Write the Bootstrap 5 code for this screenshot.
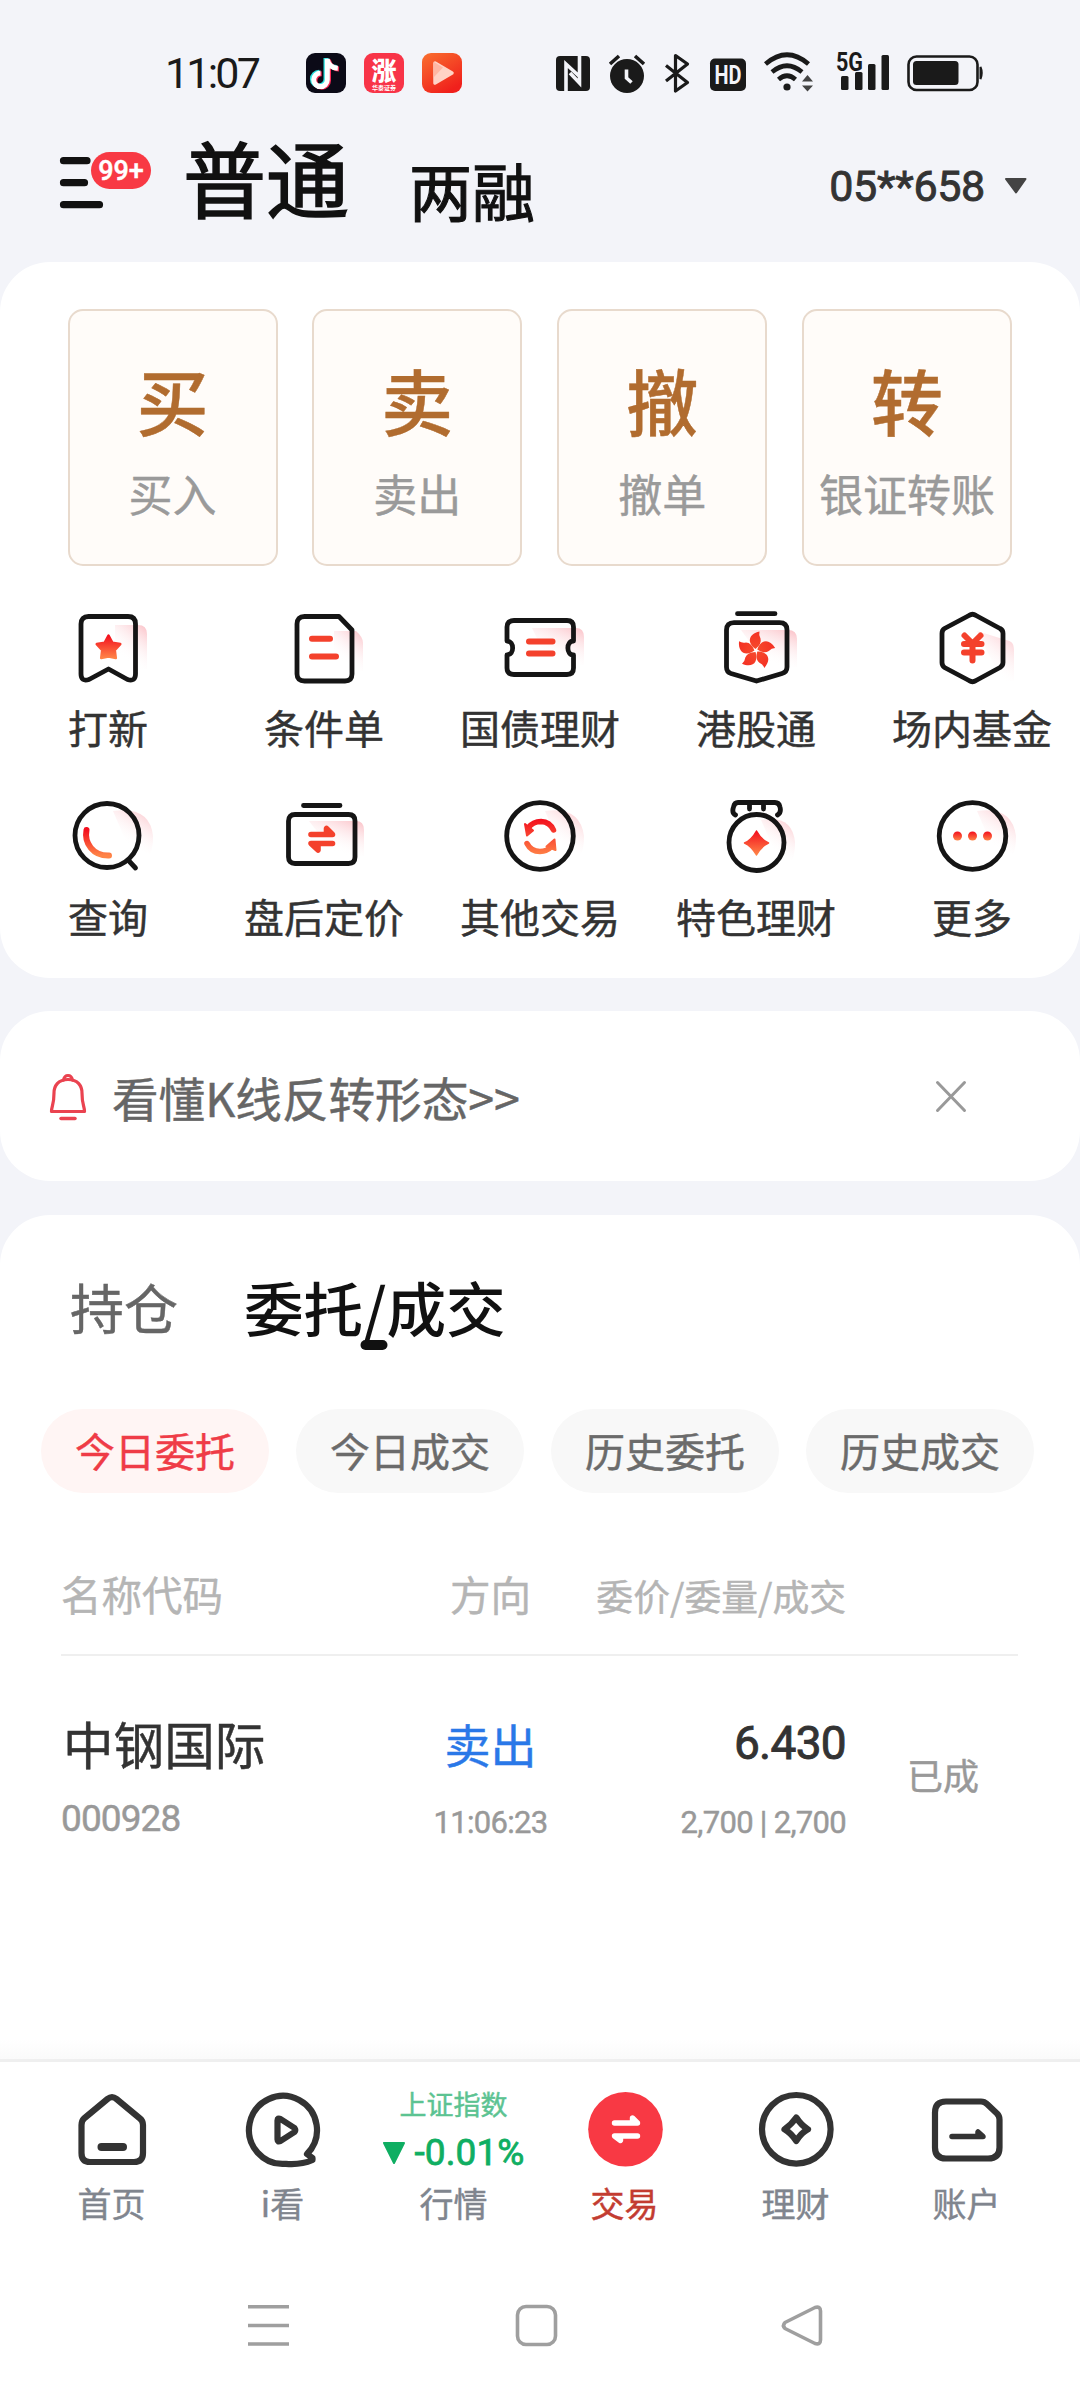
<!DOCTYPE html>
<html lang="zh-CN">
<head>
<meta charset="utf-8">
<meta name="viewport" content="width=device-width, initial-scale=1">
<title>交易</title>
<link href="https://cdn.jsdelivr.net/npm/bootstrap@5.3.0/dist/css/bootstrap.min.css" rel="stylesheet">
<style>
body{width:1080px;height:2400px;background:#f3f4f9;font-family:"Noto Sans CJK SC",sans-serif;color:#333;overflow:hidden;line-height:1;-webkit-text-stroke:.45px}
svg{display:block;flex:none;overflow:visible}
svg text{-webkit-text-stroke:0}
.num{font-family:Roboto,"Noto Sans CJK SC",sans-serif}
.status{height:126px;padding:20px 0 0 165px}
.clock{font-size:43px;letter-spacing:-2.8px;width:141px;color:#1a1a1a;line-height:50px;-webkit-text-stroke:0}
.sys{margin-left:93px}
.topbar{height:136px;padding-left:60px}
.burger{width:92px;margin-top:24px}
.count{left:31px;top:2px;width:60px;height:37px;background:#f83944;color:#fff;font-size:27px;line-height:38px;font-weight:500}
.mode-main{font-size:83px;color:#111;margin:9px 0 0 31px;-webkit-text-stroke:1.6px}
.mode-alt{font-size:63px;color:#111;margin:31px 0 0 60px;-webkit-text-stroke:1.1px}
.account{font-size:43px;line-height:50px;margin:35px 52px 0 auto;letter-spacing:-.3px;-webkit-text-stroke:.9px}
.account svg{margin-left:19px}
.panel{background:#fff;border-radius:50px}
.panel-a{height:716px;padding:47px 0 0}
.tiles{gap:34.7px;padding:0 68px 0 67.5px}
.tile{flex:1 1 0;height:257px;border:2px solid #e8dacd;border-radius:15px;background:#fffcf9;padding-top:52px;color:#9a9a9a;white-space:nowrap}
.tile b{font-weight:500;font-size:72px;line-height:72px;color:#b16c2f}
.tile span{font-size:44px;line-height:44px;margin-top:36px}
.entries{margin-top:31px}
.entry{width:216px;height:189px;font-size:40px;white-space:nowrap}
.entry svg{width:100px;height:100px}
.entry span{line-height:40px;margin-top:10px}
.ln{fill:none;stroke:#151515;stroke-width:4.8;stroke-linecap:round;stroke-linejoin:round}
.rl{fill:none;stroke:url(#hot);stroke-width:6;stroke-linecap:round;stroke-linejoin:round}
.rs{fill:none;stroke:#f4412c;stroke-width:6;stroke-linecap:round;stroke-linejoin:round}
.notice{height:170px;margin-top:33px;padding:2px 114px 0 49px;color:#666;font-size:46.6px}
.notice span{margin-left:23px}
.panel-c{height:844px;margin-top:34px;border-radius:50px 50px 0 0}
.tabs{height:194px;padding:0 70px;color:#666}
.tab1{font-size:54px;margin-top:65px}
.tab2{font-size:59.6px;color:#111;margin:62px 0 0 66px;font-weight:500;width:262px;-webkit-text-stroke:0}
.tab2 i{left:125px;bottom:-13px;width:27px;height:10px;border-radius:5px;background:#111;transform:translateX(-50%);margin-left:5px}
.pills{gap:27px;padding-left:41px}
.pill{width:228px;height:84px;background:#f8f8f8;color:#6b6b6b;font-size:40px;line-height:82px}
.pill.on{background:#fff5f4;color:#ef3c47}
.thead-row{margin:0 62px 0 61px;height:163px;border-bottom:2px solid #efefef;color:#b5b5b5;padding-top:81px;font-size:40.5px}
.c1{width:295px}.c2{width:269px}.c3{width:221px}
.thead-row .c3{font-size:36.8px;line-height:42px}
.order{margin:0 62px 0 61px;padding-top:59px}
.nm{font-size:50.6px;line-height:56px;padding-left:2px}
.side{font-size:46px;line-height:56px;color:#2a78e8}
.price{font-size:46px;line-height:56px;letter-spacing:-.7px;-webkit-text-stroke:.9px}
.code{font-size:37px;line-height:40px;margin-top:28px;letter-spacing:-.9px}
.minor{font-size:31px;line-height:40px;margin-top:32px;letter-spacing:-.7px}
.done{font-size:36px;line-height:40px;margin:39px 0 0 61px}
.gray{color:#999}
.shadow-strip{height:20px;margin-top:-20px;background:linear-gradient(#fff,#fafafa);position:relative}
.bottom{height:341px;background:#fff;border-top:3px solid #efefef}
.tabbar{padding:27px 27px 0 26px;height:190px}
.tabitem{width:171px;color:#80858e;font-size:34px}
.tabitem svg.ic{width:80px;height:80px}
.tabitem .cap{line-height:34px;margin-top:17px;white-space:nowrap}
.dk{fill:none;stroke:#333;stroke-width:6.2;stroke-linejoin:round;stroke-linecap:round}
.idx{height:80px;color:#5cc392;font-size:27px;line-height:27px;padding-top:1px}
.chg{color:#0fae62;font-size:37px;line-height:40px;letter-spacing:.1px;margin-top:16px;-webkit-text-stroke:.8px}
.sysnav{margin-top:49px}
</style>
</head>
<body>
<svg width="0" height="0" class="position-absolute">
<defs>
<linearGradient id="hot" x1="0" y1="0" x2="0" y2="1"><stop offset="0" stop-color="#f30f1e"/><stop offset="1" stop-color="#ff8447"/></linearGradient>
<linearGradient id="hotu" gradientUnits="userSpaceOnUse" x1="0" y1="33" x2="0" y2="70"><stop offset="0" stop-color="#f30f1e"/><stop offset="1" stop-color="#ff8447"/></linearGradient>
<linearGradient id="petals" gradientUnits="userSpaceOnUse" x1="0" y1="30" x2="0" y2="80"><stop offset="0" stop-color="#f32a22"/><stop offset="1" stop-color="#fb7238"/></linearGradient>
<linearGradient id="pk" x1=".95" y1="0" x2=".45" y2=".85"><stop offset="0" stop-color="#fbc3c9"/><stop offset="1" stop-color="#fff" stop-opacity="0"/></linearGradient>
<linearGradient id="orange" x1="0" y1="0" x2=".6" y2="1"><stop offset="0" stop-color="#f9702f"/><stop offset="1" stop-color="#f0201c"/></linearGradient>
</defs>
</svg>

<div class="status d-flex align-items-center">
  <div class="clock num">11:07</div>
  <svg width="156" height="40" viewBox="0 0 156 40">
    <rect width="40" height="40" rx="9" fill="#0b0a17"/>
    <g fill="none" stroke-width="5" transform="translate(-1.500,1)">
      <path d="M21.500 4V25a6.800 6.800 0 1 1-6.800-6.800M21.500 5q2 8 10.500 8.500" stroke="#2de2e0"/>
      <path d="M24 5.500V26.500a6.800 6.800 0 1 1-6.800-6.800M24 6.500q2 8 10.500 8.500" stroke="#f62a56"/>
      <path d="M22.800 4.800V25.800a6.800 6.800 0 1 1-6.800-6.800M22.800 5.800q2 8 10.500 8.500" stroke="#fff"/>
    </g>
    <rect x="58" width="40" height="40" rx="9" fill="#f83448"/>
    <text x="78" y="27" font-size="25" font-weight="900" fill="#fff" text-anchor="middle">涨</text>
    <text x="78" y="36.500" font-size="6" font-weight="700" fill="#fff" text-anchor="middle">华泰证券</text>
    <rect x="116" width="40" height="40" rx="9" fill="url(#orange)"/>
    <path d="M129 10l17 10-17 10z" fill="#ffd3c6" stroke="#ffd3c6" stroke-width="3.500" stroke-linejoin="round"/>
    <path d="M128 9l9 5.500L128 24z" fill="#ffb7a3"/>
  </svg>
  <svg class="sys" width="430" height="44" viewBox="555 51 430 44" fill="#1a1a1a">
    <rect x="556" y="56" width="34" height="35" rx="4"/>
    <path d="M566 91V64l13 12M579.500 56v27L570 73" fill="none" stroke="#f3f4f9" stroke-width="3.600"/>
    <circle cx="627" cy="76" r="17"/><path d="M610 64l9-8M644 64l-9-8" stroke="#1a1a1a" stroke-width="3.600"/><path d="M626.500 69.500v8.500l5 4.500" fill="none" stroke="#f3f4f9" stroke-width="3.600"/>
    <path d="M666 65.500l21.500 17-12 8.500V55.500l12 8.500-21.500 17" fill="none" stroke="#1a1a1a" stroke-width="3.200" stroke-linejoin="round"/>
    <rect x="710" y="58.500" width="36" height="32.500" rx="5"/>
    <text class="num" x="728" y="83.500" font-size="25" font-weight="700" fill="#f3f4f9" text-anchor="middle" textLength="27" lengthAdjust="spacingAndGlyphs">HD</text>
    <g fill="none" stroke="#1a1a1a" stroke-width="4.600"><path d="M765.500 64q21.500-18.500 43 0M772 72q15-12.500 30 0M778.500 79.500q8.500-7.500 17 0"/></g>
    <circle cx="787" cy="87" r="3.600"/><path d="M802 81.500l5.500-6.500 5.500 6.500zM802 85.500h11l-5.500 6z" fill="#444"/>
    <text class="num" x="836" y="71" font-size="25" font-weight="700" textLength="27" lengthAdjust="spacingAndGlyphs">5G</text>
    <rect x="841" y="76" width="7.500" height="14" rx="1.500"/><rect x="855" y="72" width="7.500" height="18" rx="1.500"/><rect x="868" y="64" width="7.500" height="26" rx="1.500"/><rect x="881.500" y="55" width="7.500" height="35" rx="1.500"/>
    <rect x="908.500" y="56.500" width="69" height="33.500" rx="8" fill="none" stroke="#1a1a1a" stroke-width="2.600"/>
    <rect x="913" y="61" width="45.500" height="24" rx="3.500"/><path d="M980.500 67q2.500 6 0 12z" stroke="#1a1a1a" stroke-width="2"/>
  </svg>
</div>

<header class="topbar d-flex align-items-start">
  <div class="burger position-relative">
    <svg width="44" height="64" viewBox="0 0 44 64"><path d="M3.500 10.700H27M3.500 32.700H24.500M3.500 54.700H39.500" stroke="#111" stroke-width="7.200" stroke-linecap="round"/></svg>
    <span class="count num position-absolute rounded-pill text-center">99+</span>
  </div>
  <div class="mode-main">普通</div>
  <div class="mode-alt">两融</div>
  <div class="account num d-flex align-items-center">05**658<svg width="24" height="18" viewBox="0 0 24 18"><path d="M2 2h19.500L12 15.500z" fill="#444" stroke="#444" stroke-width="2" stroke-linejoin="round"/></svg></div>
</header>

<section class="panel panel-a">
  <div class="tiles d-flex">
    <div class="tile d-flex flex-column align-items-center"><b>买</b><span>买入</span></div>
    <div class="tile d-flex flex-column align-items-center"><b>卖</b><span>卖出</span></div>
    <div class="tile d-flex flex-column align-items-center"><b>撤</b><span>撤单</span></div>
    <div class="tile d-flex flex-column align-items-center"><b>转</b><span>银证转账</span></div>
  </div>
  <div class="entries d-flex flex-wrap">
    <div class="entry d-flex flex-column align-items-center">
      <svg viewBox="0 0 100 100"><path d="M57 28H80q9 0 9 9V72H57z" fill="url(#pk)"/><path class="ln" d="M30.500 19.500H70Q77.500 19.500 77.500 27V77Q77.500 85 69.500 82.500L50.500 72 31 82.500Q23 85 23 77V27Q23 19.500 30.500 19.500Z"/><path d="M50.500 38.500l3.800 7.200 8 1.400-5.500 6 1 8-7.300-1.600-7.300 1.600 1-8-5.500-6 8-1.400z" fill="url(#hot)" stroke="url(#hot)" stroke-width="2.500" stroke-linejoin="round"/></svg><span>打新</span></div>
    <div class="entry d-flex flex-column align-items-center">
      <svg viewBox="0 0 100 100"><path d="M60 34H82q7 6 7 12V74H60z" fill="url(#pk)"/><path class="ln" d="M30.500 19.500H65L78 33V77Q78 84 71 84H30.500Q23 84 23 77V27Q23 19.500 30.500 19.500Z"/><path class="rs" d="M38 41.700H56M38 59.500H62"/></svg><span>条件单</span></div>
    <div class="entry d-flex flex-column align-items-center">
      <svg viewBox="0 0 100 100"><path d="M42 31H86q8 0 8 9V68H60z" fill="url(#pk)"/><path class="ln" d="M24 23.500H77Q83.500 23.500 83.500 30V44C76 44 76 58 83.500 58V71Q83.500 77.500 77 77.500H24Q17 77.500 17 71V58C24.500 58 24.500 44 17 44V30Q17 23.500 24 23.500Z"/><path class="rs" d="M39 44.500H62.500M39 56.500H62.500"/></svg><span>国债理财</span></div>
    <div class="entry d-flex flex-column align-items-center">
      <svg viewBox="0 0 100 100"><path d="M35 33H82q9 0 9 9V70H62z" fill="url(#pk)"/><path class="ln" d="M31.500 16.700H69M28 25.700H73.500Q81 25.700 81 33V70Q81 75 76 76.500L50.500 84 25 76.500Q20.500 75 20.500 70V33Q20.500 25.700 28 25.700Z"/><g fill="url(#petals)"><path id="petal" d="M49.500 52C41 46 42 37 53.500 34.500Q52.500 38 54.500 41.500Q56 47 49.500 52z"/><use href="#petal" transform="rotate(72 50 53.500)"/><use href="#petal" transform="rotate(144 50 53.500)"/><use href="#petal" transform="rotate(216 50 53.500)"/><use href="#petal" transform="rotate(288 50 53.500)"/></g></svg><span>港股通</span></div>
    <div class="entry d-flex flex-column align-items-center">
      <svg viewBox="0 0 100 100"><path d="M55 34L84 43Q92 44 92 52V84H80z" fill="url(#pk)"/><path class="ln" d="M47 18.500Q50.500 16 54 18.500L78 31.500Q81 33 81 36.500V65.500Q81 68.500 78 70.500L54 83.500Q50.500 86 47 83.500L22.500 70.500Q20 68.500 20 65.500V36.500Q20 33 22.500 31.500Z"/><path class="rs" d="M42.500 38.500L50.500 46.500 58.500 38.500M42 47H59.500M42 55.500H59.500M50.500 47V63.500"/></svg><span>场内基金</span></div>
    <div class="entry d-flex flex-column align-items-center">
      <svg viewBox="0 0 100 100"><path d="M55 25Q92 20 95 50Q95 62 92 68L70 60z" fill="url(#pk)"/><circle class="ln" cx="49" cy="49.500" r="32"/><path class="ln" d="M71 75L77.500 82"/><path d="M28.500 44C26 57 35 70 51 69.500" class="rl"/></svg><span>查询</span></div>
    <div class="entry d-flex flex-column align-items-center">
      <svg viewBox="0 0 100 100"><path d="M35 35H82q8 0 8 9V70H62z" fill="url(#pk)"/><path class="ln" d="M29.500 19.500H66M21 28.500H74.500Q81 28.500 81 35V71Q81 77.500 74.500 77.500H21Q14.500 77.500 14.500 71V35Q14.500 28.500 21 28.500Z"/><path d="M37 48.500H58.500L52.500 42.500V48M58.500 57.500H37L44 64V58" fill="none" stroke="#f4412c" stroke-width="5.600" stroke-linecap="round" stroke-linejoin="round"/></svg><span>盘后定价</span></div>
    <div class="entry d-flex flex-column align-items-center">
      <svg viewBox="0 0 100 100"><path d="M55 25Q90 20 94 50Q94 62 91 68L70 60z" fill="url(#pk)"/><circle class="ln" cx="50" cy="50" r="33.300"/><g fill="none" stroke="url(#hotu)" stroke-width="5.500" stroke-linecap="round"><path d="M38 42Q43 35.500 51 35.500Q60 36 63.500 44M37 57.500Q41 65.500 50 65.500Q57 65.500 62 60"/></g><path d="M35 38l8 6.500-6 5zM65.500 64l-9-3.500 8-7z" fill="url(#hotu)" stroke="url(#hotu)" stroke-width="2" stroke-linejoin="round"/></svg><span>其他交易</span></div>
    <div class="entry d-flex flex-column align-items-center">
      <svg viewBox="0 0 100 100"><path d="M55 34Q86 28 89 56Q89 68 86 74L68 64z" fill="url(#pk)"/><ellipse class="ln" cx="50.500" cy="56.500" rx="27.500" ry="28"/><path class="ln" d="M29.500 29Q25.500 27 27.500 21Q28.500 16.500 32 16.500H69Q73 16.500 74 21Q75.500 27 71.500 29M43.500 18V23M57.500 18V23"/><path d="M50.500 45q5 9 12 12q-7 3-12 12q-5-9-12-12q7-3 12-12z" fill="url(#hot)" stroke="url(#hot)" stroke-width="1.500" stroke-linejoin="round"/></svg><span>特色理财</span></div>
    <div class="entry d-flex flex-column align-items-center">
      <svg viewBox="0 0 100 100"><path d="M55 25Q90 20 94 50Q94 62 91 68L70 60z" fill="url(#pk)"/><circle class="ln" cx="50.500" cy="50" r="33.300"/><g fill="url(#hot)"><circle cx="35.500" cy="50" r="4.500"/><circle cx="50.500" cy="50" r="4.500"/><circle cx="65.500" cy="50" r="4.500"/></g></svg><span>更多</span></div>
  </div>
</section>

<section class="panel notice d-flex align-items-center">
  <svg width="40" height="48" viewBox="0 0 40 48" fill="none" stroke="#ea4350" stroke-width="3.200" stroke-linejoin="round" stroke-linecap="round"><path d="M19 6.500C9 6.500 5 13 5 20C5 32 2.500 33 2.500 38.500H35.500C35.500 33 33 32 33 20C33 13 29 6.500 19 6.500Z"/><path d="M14.500 7Q15.500 2.500 19 2.500T23.500 7"/><path d="M12 45.500H26" stroke-width="3.500"/></svg>
  <span>看懂K线反转形态&gt;&gt;</span>
  <svg class="ms-auto" width="30" height="32" viewBox="0 0 30 32"><path d="M1.500 1.500L28.500 29.500M28.500 1.500L1.500 29.500" stroke="#999" stroke-width="3" stroke-linecap="round"/></svg>
</section>

<section class="panel panel-c">
  <div class="tabs d-flex align-items-start">
    <div class="tab1">持仓</div>
    <div class="tab2 position-relative text-nowrap">委托/成交<i class="position-absolute"></i></div>
  </div>
  <div class="pills d-flex">
    <div class="pill on rounded-pill text-center">今日委托</div>
    <div class="pill rounded-pill text-center">今日成交</div>
    <div class="pill rounded-pill text-center">历史委托</div>
    <div class="pill rounded-pill text-center">历史成交</div>
  </div>
  <div class="thead-row d-flex">
    <div class="c1">名称代码</div>
    <div class="c2 text-center">方向</div>
    <div class="c3 text-nowrap d-flex justify-content-end">委价/委量/成交</div>
  </div>
  <div class="order d-flex">
    <div class="c1"><div class="nm">中钢国际</div><div class="code num gray">000928</div></div>
    <div class="c2 text-center"><div class="side">卖出</div><div class="minor num gray">11:06:23</div></div>
    <div class="c3 num text-end"><div class="price">6.430</div><div class="minor gray text-nowrap">2,700 | 2,700</div></div>
    <div class="done gray">已成</div>
  </div>
</section>

<div class="shadow-strip"></div>
<footer class="bottom">
  <nav class="tabbar d-flex">
    <div class="tabitem d-flex flex-column align-items-center"><svg class="ic" viewBox="0 0 80 80"><path class="dk" d="M12 29.500L35.500 10Q40 6.300 44.500 10L68 29.500Q71 32 71 36V64Q71 73 62 73H18Q9.500 73 9.500 64V36Q9.500 32 12 29.500Z"/><path class="dk" style="stroke-width:8" d="M29.500 58H51"/></svg><span class="cap">首页</span></div>
    <div class="tabitem d-flex flex-column align-items-center"><svg class="ic" viewBox="0 0 80 80"><path class="dk" d="M64 65A34 34 0 1 0 43 74.800Q58 76 69.500 71L69.500 69Z"/><path class="dk" d="M34.500 31.500Q34.500 28.500 37.500 30L51.500 39Q53 41 51.500 43L37.500 52Q34.500 53.500 34.500 50.500Z"/></svg><span class="cap">i看</span></div>
    <div class="tabitem d-flex flex-column align-items-center"><div class="idx text-center text-nowrap">上证指数<div class="chg num d-flex align-items-center"><svg class="me-2" width="24" height="24" viewBox="0 0 24 24"><path d="M2 2h20L12 22z" fill="#0fae62" stroke="#0fae62" stroke-width="2" stroke-linejoin="round"/></svg>-0.01%</div></div><span class="cap">行情</span></div>
    <div class="tabitem d-flex flex-column align-items-center"><svg class="ic" viewBox="0 0 80 80"><circle cx="40.500" cy="40.300" r="37.300" fill="#f83944"/><path d="M29.500 34H52.500L47.500 29V34M52.500 47H29.500L35.500 51.500V47" fill="#fff" stroke="#fff" stroke-width="5.400" stroke-linecap="round" stroke-linejoin="round"/></svg><span class="cap" style="color:#c33c31">交易</span></div>
    <div class="tabitem d-flex flex-column align-items-center"><svg class="ic" viewBox="0 0 80 80"><circle class="dk" cx="40.300" cy="40.300" r="34.300"/><path class="dk" d="M40.300 28.500Q45 36 52 40.300Q45 44 40.300 52Q35 44 28.500 40.300Q35 36 40.300 28.500Z"/></svg><span class="cap">理财</span></div>
    <div class="tabitem d-flex flex-column align-items-center"><svg class="ic" viewBox="0 0 80 80"><path class="dk" d="M19 12.500H54Q57.500 12.500 60 15L70 24.500Q72.500 27 72.500 30.500V58.500Q72.500 69.500 61 69.500H19Q8 69.500 8 58.500V23.500Q8 12.500 19 12.500Z"/><path class="dk" style="stroke-width:5.500" d="M25 47.500H56L51 43V47"/></svg><span class="cap">账户</span></div>
  </nav>
  <svg class="sysnav" width="1080" height="48" viewBox="0 2301 1080 48" fill="none" stroke="#9f9f9f" stroke-width="3.600" stroke-linejoin="round"><path d="M248 2306.700H289M248 2325.500H289M248 2344H289"/><rect x="517.500" y="2306.500" width="38" height="38" rx="8.500"/><path d="M785 2322.500L815 2307.500Q820.500 2306 820.500 2311V2340Q820.500 2345 815 2343.500L785 2328.500Q782 2325.500 785 2322.500Z"/></svg>
</footer>
<script src="https://cdn.jsdelivr.net/npm/bootstrap@5.3.0/dist/js/bootstrap.bundle.min.js"></script>
</body>
</html>
